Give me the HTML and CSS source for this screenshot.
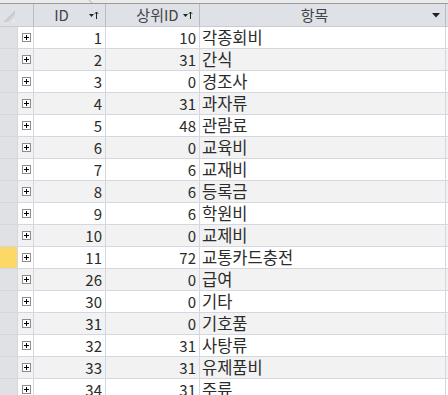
FILE: index.html
```html
<!DOCTYPE html>
<html lang="ko">
<head>
    <meta charset="UTF-8">
    <title>항목 데이터시트</title>
    <link rel="stylesheet" href="styles.css">
</head>
<body>
    <div class="tabstrip"><span class="tab-edge"></span></div>
    <div class="sheet">
        <div class="row head">
            <div class="corner"><span class="tri"></span></div>
            <div class="hcell col-id">ID
                <svg class="sort" width="10" height="9" viewBox="0 0 10 9"><path d="M0 3h5l-2.5 3z" fill="#222"/><path d="M7.5 1v7M5.8 2.8L7.5 1l1.7 1.8" stroke="#222" fill="none"/></svg>
            </div>
            <div class="hcell col-parent">상위ID
                <svg class="sort" width="10" height="9" viewBox="0 0 10 9"><path d="M0 3h5l-2.5 3z" fill="#222"/><path d="M7.5 1v7M5.8 2.8L7.5 1l1.7 1.8" stroke="#222" fill="none"/></svg>
            </div>
            <div class="hcell col-name">항목
                <svg class="drop" width="8" height="5" viewBox="0 0 8 5"><path d="M0 0h8l-4 4.5z" fill="#222"/></svg>
            </div>
            <div class="fill"></div>
        </div>
        <div id="rows"></div>
    </div>

    <script>
        const items = [
            [1, 10, '각종회비'], [2, 31, '간식'], [3, 0, '경조사'], [4, 31, '과자류'],
            [5, 48, '관람료'], [6, 0, '교육비'], [7, 6, '교재비'], [8, 6, '등록금'],
            [9, 6, '학원비'], [10, 0, '교제비'], [11, 72, '교통카드충전'], [26, 0, '급여'],
            [30, 0, '기타'], [31, 0, '기호품'], [32, 31, '사탕류'], [33, 31, '유제품비'],
            [34, 31, '주류']
        ];
        const plus = '<svg width="9" height="9" viewBox="0 0 9 9"><rect x="0.5" y="0.5" width="8" height="8" fill="#fff" stroke="#8c8c8c"/><path d="M2 4.5h5M4.5 2v5" stroke="#000"/></svg>';
        const rows = document.getElementById('rows');
        items.forEach(([id, parent, name], i) => {
            const row = document.createElement('div');
            row.className = 'row' + (i % 2 ? ' alt' : '') + (id === 11 ? ' current' : '');
            row.innerHTML = `<div class="sel"></div><div class="exp">${plus}</div>` +
                `<div class="cell num">${id}</div><div class="cell num">${parent}</div>` +
                `<div class="cell text">${name}</div><div class="fill"></div>`;
            rows.appendChild(row);
        });
    </script>
</body>
</html>
```

FILE: styles.css
```css
body {
    margin: 0;
    background: #fff;
    font-family: "Noto Sans CJK KR", "Noto Sans", sans-serif;
    font-size: 15px;
    color: #2b2b2b;
    overflow: hidden;
}
.tabstrip {
    height: 3px;
    background: #ebebeb;
    position: relative;
}
.tab-edge {
    position: absolute;
    left: 84px;
    top: 0;
    width: 6px;
    height: 3px;
    border-right: 1px solid #b0b0b0;
    transform: skewX(45deg);
}
.row {
    display: grid;
    grid-template-columns: 18px 16px 72px 94px 246px 2px;
    height: 22px;
}
.row > div {
    box-sizing: border-box;
    border-bottom: 1px solid #d3d8e0;
}
.head {
    background: #dee1e6;
    border-top: 1px solid #9a9a9a;
    height: 23px;
}
.head > div {
    border-bottom: 1px solid #c8ccd2;
    border-right: 1px solid #b8bcc2;
    color: #444;
}
.corner {
    grid-column: span 2;
    position: relative;
}
.tri {
    position: absolute;
    left: 4px;
    top: 7px;
    width: 11px;
    height: 11px;
    background: linear-gradient(135deg, transparent 50%, #c4c8ce 50%, #f2f3f5);
}
.hcell {
    position: relative;
    text-align: center;
    font-size: 15px;
    line-height: 21px;
    white-space: nowrap;
}
.col-id {
    padding-right: 16px;
}
.col-parent {
    padding-left: 10px;
}
.col-name {
    padding-right: 16px;
}
.sort {
    position: absolute;
    right: 6px;
    top: 7px;
}
.drop {
    position: absolute;
    right: 5px;
    top: 9px;
}
.head .fill {
    border-right: none;
}
.sel {
    background: #dfe1e5;
    border-right: 1px solid #d3d8e0;
}
.current .sel {
    background: #fdd866;
}
.exp {
    border-right: 1px solid #d3d8e0;
    padding: 6px 0 0 4px;
}
.exp svg {
    display: block;
}
.cell {
    border-right: 1px solid #d3d8e0;
    line-height: 21px;
    white-space: nowrap;
}
.num {
    text-align: right;
    padding-right: 3px;
}
.text {
    padding-left: 2px;
    font-size: 16.5px;
    line-height: 20px;
}
.alt .exp,
.alt .cell,
.alt .fill {
    background: #f2f2f2;
}
```
